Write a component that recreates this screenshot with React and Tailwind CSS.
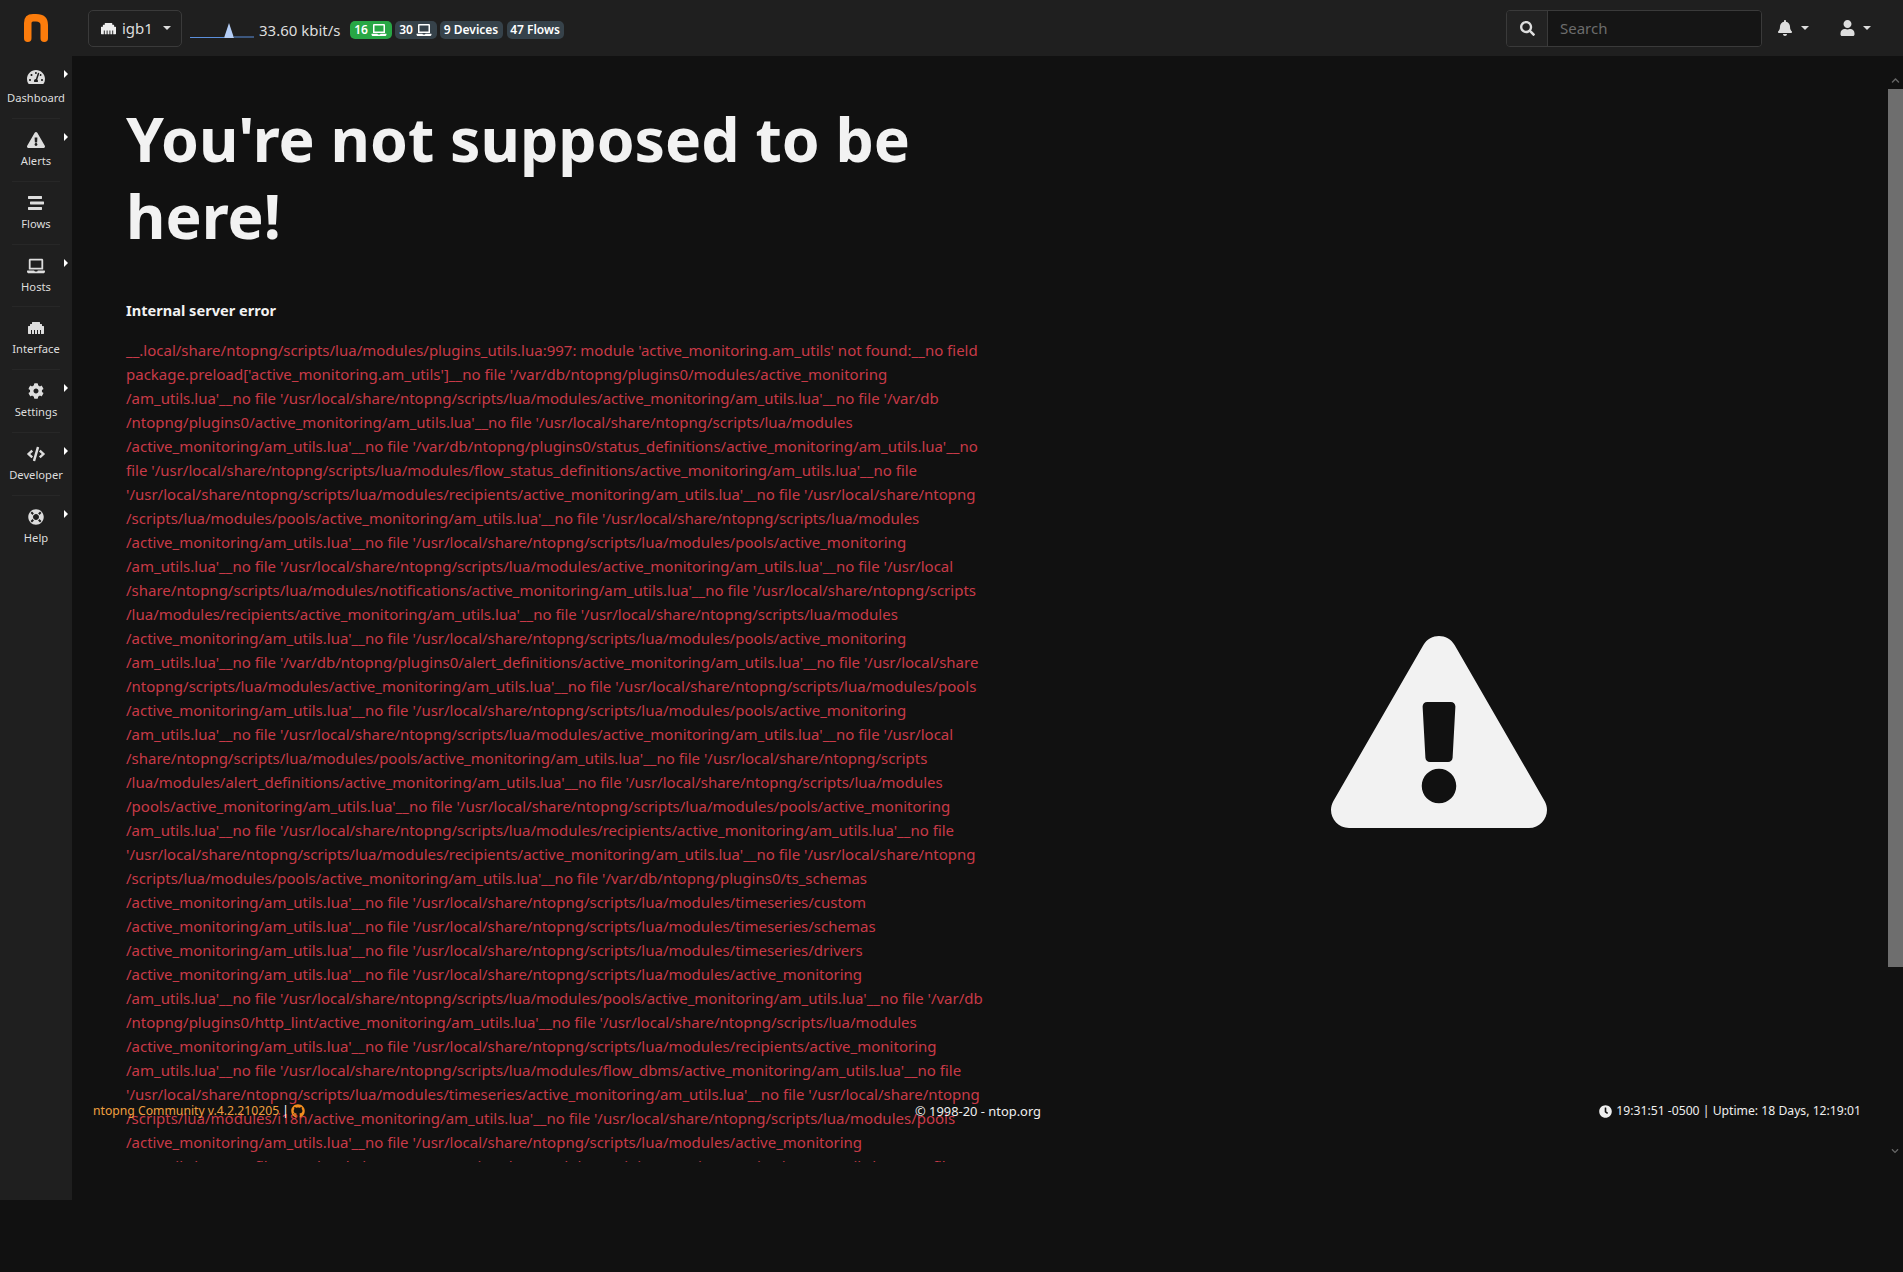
import {
  FaBell,
  FaChevronDown,
  FaChevronUp,
  FaClock,
  FaCode,
  FaCog,
  FaEthernet,
  FaExclamationTriangle,
  FaGithub,
  FaLaptop,
  FaLifeRing,
  FaSearch,
  FaStream,
  FaTachometerAlt,
  FaUser,
} from "react-icons/fa";

/* ================= SIDEBAR MENU ================= */
const MENU = [
  { name: "Dashboard", icon: FaTachometerAlt, arrow: true },
  { name: "Alerts", icon: FaExclamationTriangle, arrow: true },
  { name: "Flows", icon: FaStream },
  { name: "Hosts", icon: FaLaptop, arrow: true },
  { name: "Interface", icon: FaEthernet },
  { name: "Settings", icon: FaCog, arrow: true },
  { name: "Developer", icon: FaCode, arrow: true },
  { name: "Help", icon: FaLifeRing, arrow: true },
];

/* ================= ERROR TEXT ================= */
const ERROR_LINES = [
  "__.local/share/ntopng/scripts/lua/modules/plugins_utils.lua:997: module 'active_monitoring.am_utils' not found:__no field",
  "package.preload['active_monitoring.am_utils']__no file '/var/db/ntopng/plugins0/modules/active_monitoring",
  "/am_utils.lua'__no file '/usr/local/share/ntopng/scripts/lua/modules/active_monitoring/am_utils.lua'__no file '/var/db",
  "/ntopng/plugins0/active_monitoring/am_utils.lua'__no file '/usr/local/share/ntopng/scripts/lua/modules",
  "/active_monitoring/am_utils.lua'__no file '/var/db/ntopng/plugins0/status_definitions/active_monitoring/am_utils.lua'__no",
  "file '/usr/local/share/ntopng/scripts/lua/modules/flow_status_definitions/active_monitoring/am_utils.lua'__no file",
  "'/usr/local/share/ntopng/scripts/lua/modules/recipients/active_monitoring/am_utils.lua'__no file '/usr/local/share/ntopng",
  "/scripts/lua/modules/pools/active_monitoring/am_utils.lua'__no file '/usr/local/share/ntopng/scripts/lua/modules",
  "/active_monitoring/am_utils.lua'__no file '/usr/local/share/ntopng/scripts/lua/modules/pools/active_monitoring",
  "/am_utils.lua'__no file '/usr/local/share/ntopng/scripts/lua/modules/active_monitoring/am_utils.lua'__no file '/usr/local",
  "/share/ntopng/scripts/lua/modules/notifications/active_monitoring/am_utils.lua'__no file '/usr/local/share/ntopng/scripts",
  "/lua/modules/recipients/active_monitoring/am_utils.lua'__no file '/usr/local/share/ntopng/scripts/lua/modules",
  "/active_monitoring/am_utils.lua'__no file '/usr/local/share/ntopng/scripts/lua/modules/pools/active_monitoring",
  "/am_utils.lua'__no file '/var/db/ntopng/plugins0/alert_definitions/active_monitoring/am_utils.lua'__no file '/usr/local/share",
  "/ntopng/scripts/lua/modules/active_monitoring/am_utils.lua'__no file '/usr/local/share/ntopng/scripts/lua/modules/pools",
  "/active_monitoring/am_utils.lua'__no file '/usr/local/share/ntopng/scripts/lua/modules/pools/active_monitoring",
  "/am_utils.lua'__no file '/usr/local/share/ntopng/scripts/lua/modules/active_monitoring/am_utils.lua'__no file '/usr/local",
  "/share/ntopng/scripts/lua/modules/pools/active_monitoring/am_utils.lua'__no file '/usr/local/share/ntopng/scripts",
  "/lua/modules/alert_definitions/active_monitoring/am_utils.lua'__no file '/usr/local/share/ntopng/scripts/lua/modules",
  "/pools/active_monitoring/am_utils.lua'__no file '/usr/local/share/ntopng/scripts/lua/modules/pools/active_monitoring",
  "/am_utils.lua'__no file '/usr/local/share/ntopng/scripts/lua/modules/recipients/active_monitoring/am_utils.lua'__no file",
  "'/usr/local/share/ntopng/scripts/lua/modules/recipients/active_monitoring/am_utils.lua'__no file '/usr/local/share/ntopng",
  "/scripts/lua/modules/pools/active_monitoring/am_utils.lua'__no file '/var/db/ntopng/plugins0/ts_schemas",
  "/active_monitoring/am_utils.lua'__no file '/usr/local/share/ntopng/scripts/lua/modules/timeseries/custom",
  "/active_monitoring/am_utils.lua'__no file '/usr/local/share/ntopng/scripts/lua/modules/timeseries/schemas",
  "/active_monitoring/am_utils.lua'__no file '/usr/local/share/ntopng/scripts/lua/modules/timeseries/drivers",
  "/active_monitoring/am_utils.lua'__no file '/usr/local/share/ntopng/scripts/lua/modules/active_monitoring",
  "/am_utils.lua'__no file '/usr/local/share/ntopng/scripts/lua/modules/pools/active_monitoring/am_utils.lua'__no file '/var/db",
  "/ntopng/plugins0/http_lint/active_monitoring/am_utils.lua'__no file '/usr/local/share/ntopng/scripts/lua/modules",
  "/active_monitoring/am_utils.lua'__no file '/usr/local/share/ntopng/scripts/lua/modules/recipients/active_monitoring",
  "/am_utils.lua'__no file '/usr/local/share/ntopng/scripts/lua/modules/flow_dbms/active_monitoring/am_utils.lua'__no file",
  "'/usr/local/share/ntopng/scripts/lua/modules/timeseries/active_monitoring/am_utils.lua'__no file '/usr/local/share/ntopng",
  "/scripts/lua/modules/i18n/active_monitoring/am_utils.lua'__no file '/usr/local/share/ntopng/scripts/lua/modules/pools",
  "/active_monitoring/am_utils.lua'__no file '/usr/local/share/ntopng/scripts/lua/modules/active_monitoring",
  "/am_utils.lua'__no file '/usr/local/share/ntopng/scripts/lua/modules/recipients/active_monitoring/am_utils.lua'__no file",
];

/* ================= SMALL PARTS ================= */
const Caret = () => (
  <span className="inline-block w-0 h-0 border-x-[4px] border-x-transparent border-t-[4px] border-t-[#dddddd]" />
);

const Badge = ({ className, children }) => (
  <span
    className={`flex items-center justify-center gap-[3px] h-[18px] rounded-[5px] text-[12px] font-semibold leading-none text-white whitespace-nowrap ${className}`}
  >
    {children}
  </span>
);

const SidebarItem = ({ item }) => {
  const Icon = item.icon;

  return (
    <div className="relative h-[62.85px] flex flex-col items-center border-b border-[#272727] mx-3 last:border-b-0">
      <Icon className="mt-[13px] h-4 w-[18px] text-[#dddddd]" />
      <span className="mt-[5px] text-[11.2px] leading-4 text-[#dddddd] whitespace-nowrap">
        {item.name}
      </span>
      {item.arrow && (
        <span className="absolute left-[52px] top-[14px] w-0 h-0 border-y-[4px] border-y-transparent border-l-[4px] border-l-white" />
      )}
    </div>
  );
};

/* ================= MAIN ================= */
export default function App() {
  return (
    <div className="relative h-[1272px] w-full overflow-hidden bg-[#111111] font-['Noto_Sans',sans-serif] text-[#dddddd]">
      {/* NAVBAR */}
      <header className="h-[56px] bg-[#1f1f1f] flex items-center pl-[24px] pr-[32px]">
        <svg width="24" height="28" viewBox="0 0 24 28" className="shrink-0">
          <path
            d="M3.75 24.25V9Q3.75 3.75 9 3.75H12Q20.25 3.75 20.25 11V24.25"
            fill="none"
            stroke="#fb7c0c"
            strokeWidth="7.5"
            strokeLinecap="round"
          />
        </svg>

        <div className="ml-[40px] h-[37px] w-[94px] shrink-0 flex items-center pl-[12px] border border-[#3a3a3a] rounded-[5px]">
          <FaEthernet className="h-[15px] w-[15px] text-[#eeeeee]" />
          <span className="ml-[6px] text-[15px] leading-none">igb1</span>
          <span className="ml-[10px] flex">
            <Caret />
          </span>
        </div>

        <svg width="64" height="16" viewBox="0 0 64 16" className="ml-[8px] mt-[6px] shrink-0">
          <path d="M34 15L39 0L44 15Z" fill="#b4cdf5" />
          <path d="M0 14.5H34M44 14H64" stroke="#5b8fdc" strokeWidth="1" />
        </svg>
        <span className="ml-[5px] mt-[4px] text-[15px] leading-none whitespace-nowrap">33.60 kbit/s</span>

        <div className="ml-[9px] mt-[4px] flex items-center">
          <Badge className="bg-[#28a745] w-[42px]">
            16 <FaLaptop className="h-3 w-[16px] shrink-0" />
          </Badge>
          <Badge className="ml-[3px] bg-[#36424a] w-[42px]">
            30 <FaLaptop className="h-3 w-[16px] shrink-0" />
          </Badge>
          <Badge className="ml-[3px] bg-[#36424a] w-[63px]">9 Devices</Badge>
          <Badge className="ml-[4px] bg-[#36424a] w-[57px]">47 Flows</Badge>
        </div>

        <div className="ml-auto h-[37px] w-[256px] flex border border-[#3a3a3a] rounded-[4px] overflow-hidden">
          <div className="w-[41px] flex items-center justify-center bg-[#222222] border-r border-[#3a3a3a]">
            <FaSearch className="h-[15px] w-[15px]" />
          </div>
          <div className="flex-1 flex items-center pl-[12px] bg-[#151515] text-[15px] text-[#6c6c6c]">Search</div>
        </div>

        <div className="ml-[16px] flex items-center gap-[9px]">
          <FaBell className="h-4 w-[14px]" />
          <Caret />
        </div>
        <div className="ml-[31px] flex items-center gap-[8px]">
          <FaUser className="h-4 w-[15px]" />
          <Caret />
        </div>
      </header>

      <div className="flex">
        {/* SIDEBAR */}
        <aside className="w-[72px] h-[1144px] shrink-0 bg-[#1f1f1f]">
          {MENU.map((item) => (
            <SidebarItem key={item.name} item={item} />
          ))}
        </aside>

        {/* CONTENT */}
        <main className="flex-1 h-[1106px] flex overflow-hidden">
          <div className="w-[918px] shrink-0 pl-[54px] pt-[44px]">
            <h1 className="w-[800px] text-[60.7px] leading-[77px] font-bold text-[#f2f2f2]">
              You're not supposed to be here!
            </h1>
            <h5 className="mt-[44px] text-[14.6px] leading-6 font-bold text-[#f2f2f2]">Internal server error</h5>
            <div className="mt-[16px] text-[15px] leading-6 text-[#c93a48]">
              {ERROR_LINES.map((line, i) => (
                <div key={i} className="whitespace-nowrap">
                  {line}
                </div>
              ))}
            </div>
          </div>

          <div className="flex-1 flex justify-center pt-[580px]">
            <FaExclamationTriangle className="h-[192px] w-[216px] text-[#f2f2f2]" />
          </div>

          {/* SCROLLBAR */}
          <div className="w-[16px] shrink-0 flex flex-col items-center">
            <FaChevronUp className="mt-[20px] h-[9px] w-[9px] text-[#666666]" />
            <div className="mt-[4px] h-[878px] w-[15px] bg-[#6e6e6e]" />
            <FaChevronDown className="mt-[180px] h-[8px] w-[8px] text-[#666666]" />
          </div>
        </main>
      </div>

      {/* FOOTER laid over the error text */}
      <footer className="absolute left-[93px] right-[42px] top-[1103px] h-4 flex items-center text-[12px] leading-4">
        <span className="text-[12.2px] text-[#f0a040] whitespace-nowrap">ntopng Community v.4.2.210205</span>
        <span className="ml-[3px] text-white">|</span>
        <FaGithub className="ml-[2px] h-[14px] w-[14px] text-[#f08c1e]" />
        <span className="absolute left-[822px] text-[12.9px] text-[#eeeeee] whitespace-nowrap">© 1998-20 - ntop.org</span>
        <span className="ml-auto flex items-center gap-[4px] text-[12.2px] text-[#eeeeee] whitespace-nowrap">
          <FaClock className="h-[13px] w-[13px]" />
          19:31:51 -0500 | Uptime: 18 Days, 12:19:01
        </span>
      </footer>
    </div>
  );
}
